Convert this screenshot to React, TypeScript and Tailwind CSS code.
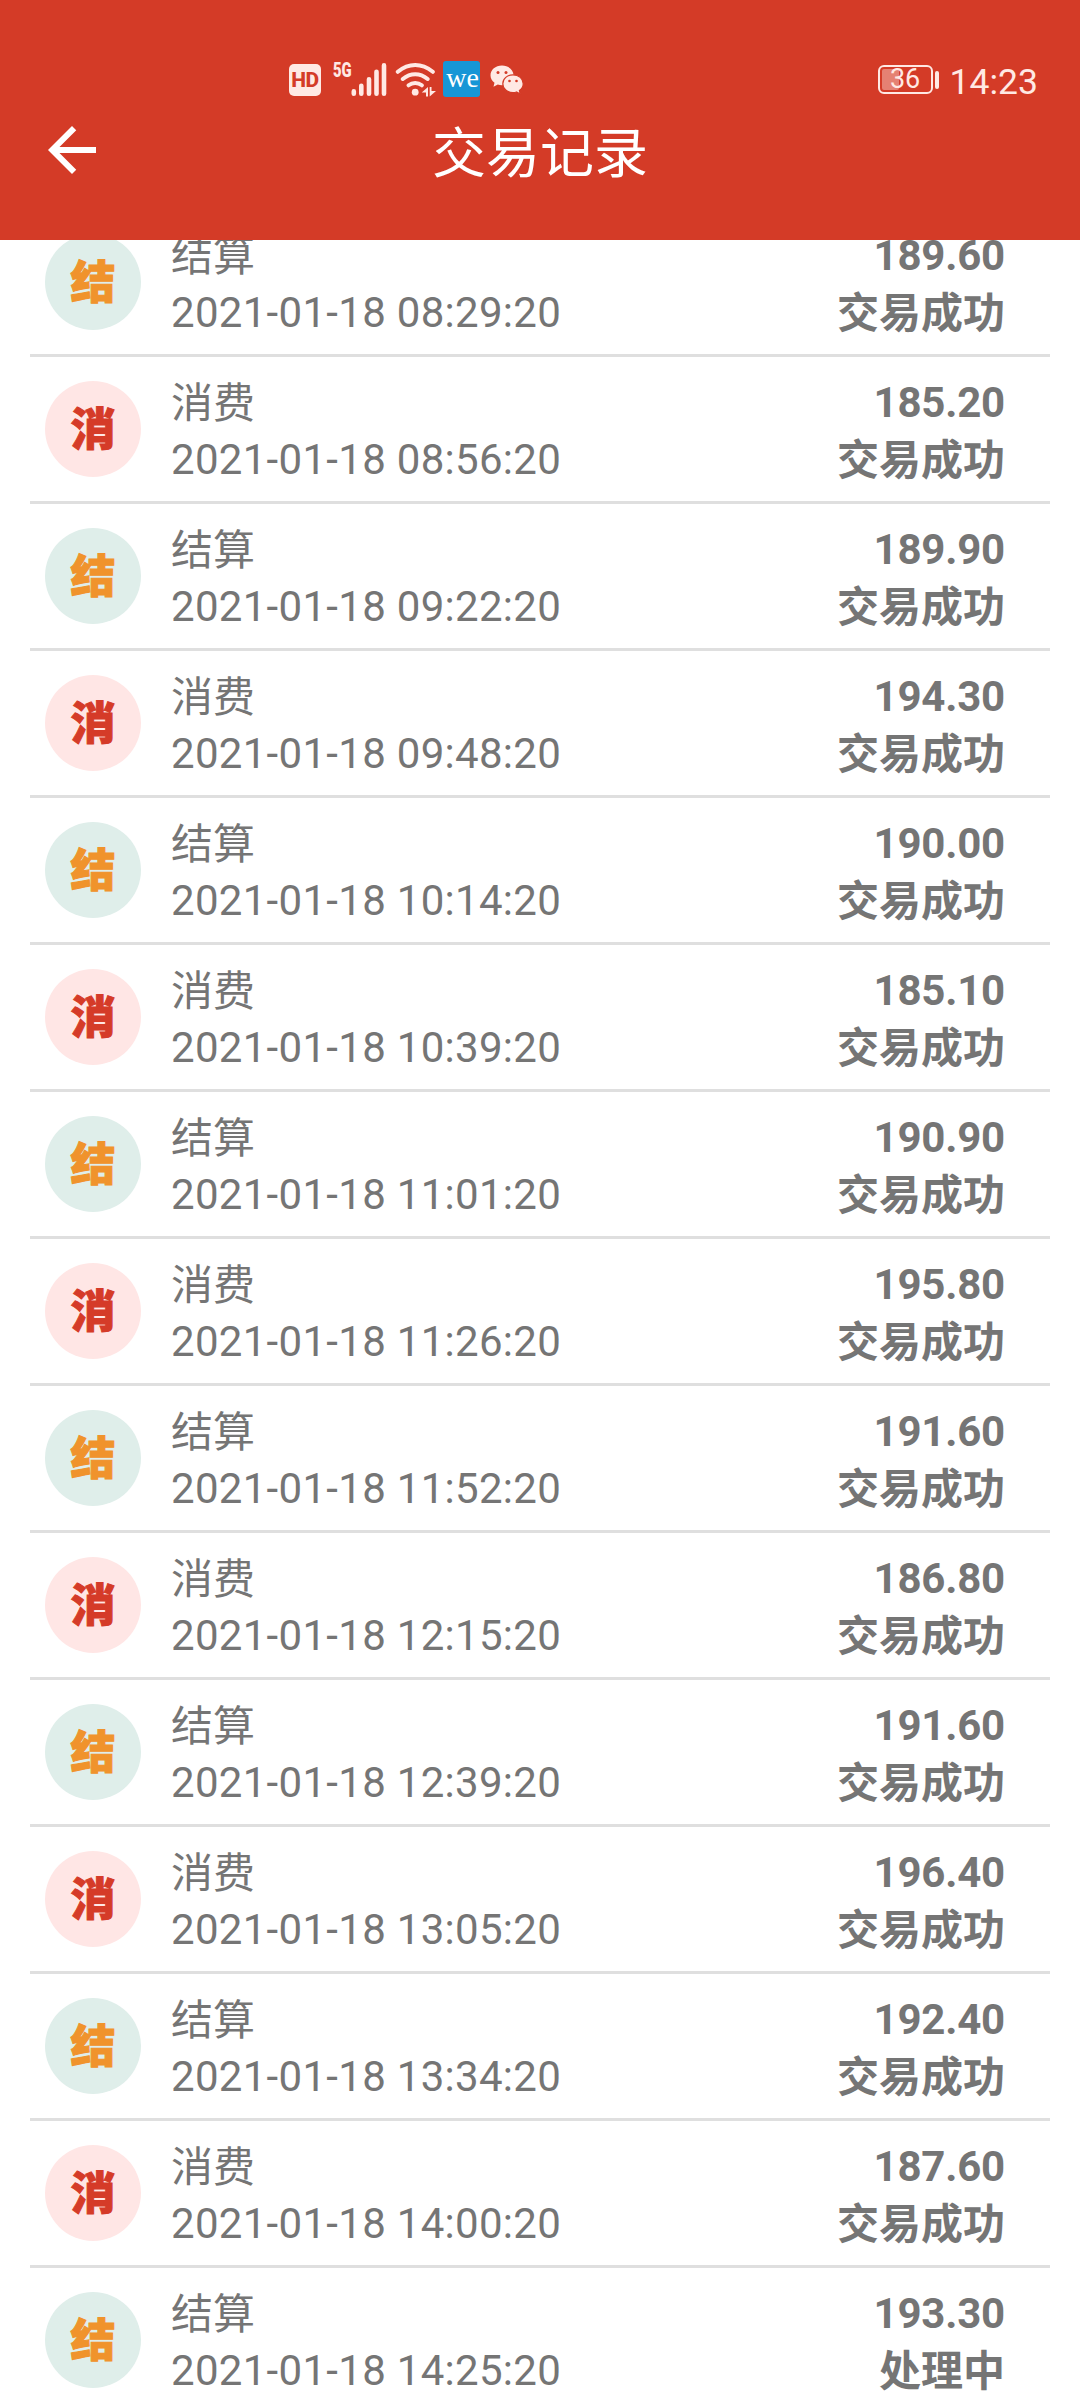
type Kind = "settle" | "spend";

type Transaction = {
  kind: Kind;
  time: string;
  amount: string;
  status?: string;
};

const TRANSACTIONS: Transaction[] = [
  { kind: "settle", time: "08:29:20", amount: "189.60" },
  { kind: "spend", time: "08:56:20", amount: "185.20" },
  { kind: "settle", time: "09:22:20", amount: "189.90" },
  { kind: "spend", time: "09:48:20", amount: "194.30" },
  { kind: "settle", time: "10:14:20", amount: "190.00" },
  { kind: "spend", time: "10:39:20", amount: "185.10" },
  { kind: "settle", time: "11:01:20", amount: "190.90" },
  { kind: "spend", time: "11:26:20", amount: "195.80" },
  { kind: "settle", time: "11:52:20", amount: "191.60" },
  { kind: "spend", time: "12:15:20", amount: "186.80" },
  { kind: "settle", time: "12:39:20", amount: "191.60" },
  { kind: "spend", time: "13:05:20", amount: "196.40" },
  { kind: "settle", time: "13:34:20", amount: "192.40" },
  { kind: "spend", time: "14:00:20", amount: "187.60" },
  { kind: "settle", time: "14:25:20", amount: "193.30", status: "处理中" },
];

const KINDS = {
  settle: { label: "结算", mark: "结", style: "bg-[#dfeeea] text-[#f0932c]" },
  spend: { label: "消费", mark: "消", style: "bg-[#ffe6e5] text-[#d53b28]" },
};

function SignalIcon() {
  return (
    <svg className="h-[40px] w-[36px]" viewBox="0 0 36 40" stroke="#ffe9e4" strokeWidth="4.6" strokeLinecap="round">
      <path d="M2.800 33.700v-2.300M10.300 33.700v-8M18 33.700v-14.500M25.500 33.700v-22M33 33.700v-28.300" />
    </svg>
  );
}

function WifiIcon() {
  return (
    <svg className="h-[40px] w-[42px]" viewBox="0 0 42 40" fill="none" stroke="#ffe9e4" strokeWidth="4" strokeLinecap="round">
      <path d="M2.800 11.800Q11 5 20.200 5T37.800 11.800M7.800 19Q13.500 14.300 20.200 14.300T32.600 19M13.600 25.300Q16.500 23 20.200 23T26.800 25.300" />
      <circle cx="20.200" cy="32.200" r="3.400" fill="#ffe9e4" stroke="none" />
      <path d="M33 27v9.500h-2v-4h-4.300zM34.700 36.500v-9.500h1.800v4h4.500z" fill="#ffe9e4" stroke="none" />
    </svg>
  );
}

function WechatIcon() {
  return (
    <svg className="h-[30px] w-[34px]" viewBox="0 0 34 30">
      <path d="M12 .5C5.500.5.5 4.800.5 10.300c0 3 1.500 5.700 4 7.500l-1 4 4.300-2.200c1.300.4 2.700.6 4.200.6 6.300 0 11.500-4.400 11.500-9.900S18.300.5 12 .5z" fill="#ffe9e4" />
      <path d="M23 9.800c-5.700 0-10.200 4-10.200 8.900s4.500 8.900 10.200 8.900c1.200 0 2.400-.2 3.500-.6l3.800 2-.9-3.400c2.300-1.600 3.800-4.100 3.800-6.900 0-4.900-4.500-8.900-10.200-8.900z" fill="#ffe9e4" stroke="#d43b27" strokeWidth="1.200" />
      <g fill="#d43b27">
        <circle cx="8" cy="7.500" r="1.500" />
        <circle cx="16" cy="7.500" r="1.500" />
        <circle cx="19.500" cy="16" r="1.300" />
        <circle cx="26.500" cy="16" r="1.300" />
      </g>
    </svg>
  );
}

function StatusBar() {
  return (
    <div className="flex h-[114px] items-start justify-between pl-[289px] pr-[42px] pt-[60px] text-[#ffe9e4]">
      <div className="flex items-start">
        <span className="mt-[4px] flex h-[32px] w-[32px] items-center justify-center rounded-[5px] bg-[#ffe9e4] text-[21px] font-extrabold leading-none tracking-[-0.5px] text-[#d43b27]">
          HD
        </span>
        <span className="ml-[12px] w-[18px] origin-left scale-x-[0.74] text-[20px] font-black leading-[20px]">5G</span>
        <SignalIcon />
        <span className="ml-[8px]">
          <WifiIcon />
        </span>
        <span className="ml-[6px] mt-[1px] flex h-[36px] w-[37px] items-center justify-center rounded-[3px] bg-[#1796d6] pb-[2px] pl-[2px] font-['Liberation_Serif'] text-[28px] leading-none text-white">
          we
        </span>
        <span className="ml-[10px] mt-[5px]">
          <WechatIcon />
        </span>
      </div>
      <div className="flex items-start">
        <div className="relative mt-[5px] flex h-[29px] w-[55px] items-center justify-center rounded-[6px] border-2 border-[#ffe9e4]">
          <div className="absolute left-[2px] top-[2px] h-[21px] w-[17px] rounded-[2px] bg-[#ffe9e4]/40" />
          <span className="relative text-[27px] leading-none">36</span>
        </div>
        <span className="ml-[2px] mt-[11px] h-[18px] w-[4px] rounded-[2px] bg-[#ffe9e4]" />
        <span className="ml-[11px] pt-px text-[35.5px] leading-[43px]">14:23</span>
      </div>
    </div>
  );
}

function Header() {
  return (
    <header className="h-[240px] shrink-0 bg-[#d43b27]">
      <StatusBar />
      <div className="grid h-[82px] grid-cols-[1fr_auto_1fr] items-start px-[36px] text-white">
        <button aria-label="返回" className="h-[72px] w-[72px]">
          <svg viewBox="0 0 24 24" fill="currentColor">
            <path d="M20 11H7.830l5.590-5.590L12 4l-8 8 8 8 1.410-1.410L7.830 13H20v-2z" />
          </svg>
        </button>
        <h1 className="text-[54px] leading-[82px]">交易记录</h1>
      </div>
    </header>
  );
}

function TransactionRow({ kind, time, amount, status = "交易成功" }: Transaction) {
  const { label, mark, style } = KINDS[kind];
  return (
    <li className="mx-[30px] flex h-[147px] shrink-0 border-b-[3px] border-[#dfdfdf] pl-[15px] pr-[45px]">
      <span
        className={`mt-[24px] flex h-[96px] w-[96px] items-center justify-center rounded-full pt-[2px] text-[45px] font-black leading-none [-webkit-text-stroke:1px_currentColor] ${style}`}
      >
        {mark}
      </span>
      <div className="ml-[30px] mt-[17px] flex-1">
        <p className="leading-[59px]">{label}</p>
        <p className="leading-[53px] tracking-[0.3px]">2021-01-18 {time}</p>
      </div>
      <div className="mt-[17px] text-right font-bold">
        <p className="leading-[57px] tracking-[-0.2px]">{amount}</p>
        <p className="leading-[59px]">{status}</p>
      </div>
    </li>
  );
}

export default function App() {
  return (
    <div className="flex h-[2400px] w-[1080px] flex-col overflow-hidden bg-white font-['Roboto','Noto_Sans_CJK_SC',sans-serif] text-[42px] text-[#757575]">
      <Header />
      {/* the list is scrolled, so the first row starts under the header */}
      <div className="min-h-0 flex-1 overflow-hidden">
        <ul className="-mt-[30px] flex flex-col">
          {TRANSACTIONS.map((item) => (
            <TransactionRow key={item.time} {...item} />
          ))}
        </ul>
      </div>
    </div>
  );
}
